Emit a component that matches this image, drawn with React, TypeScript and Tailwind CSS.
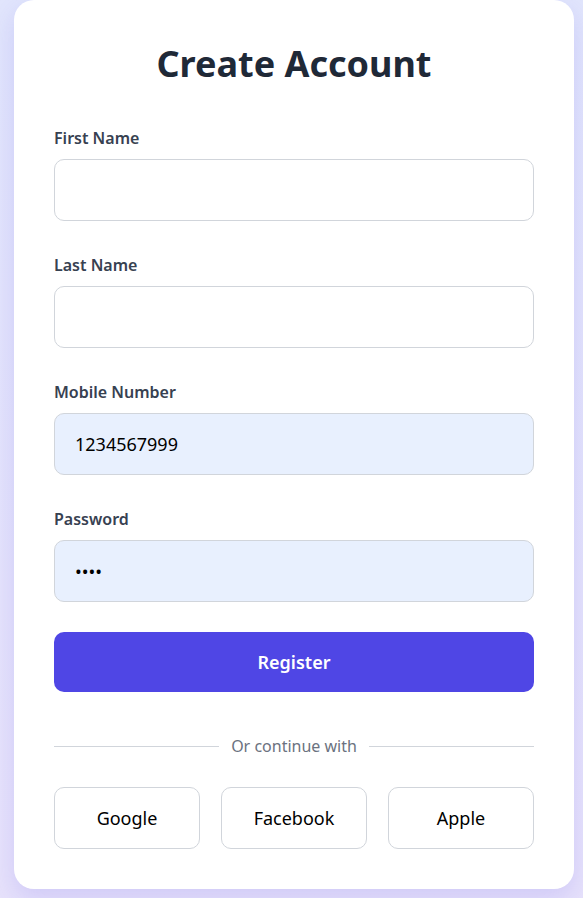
import React from 'react';

const font = { fontFamily: '"Noto Sans", "Open Sans", sans-serif' };

function Field({ label, type = 'text', value }: { label: string; type?: string; value?: string }) {
  const filled = value !== undefined;
  return (
    <div className="flex flex-col">
      <label className="text-base leading-6 font-semibold text-[#374151] mb-[9px]">{label}</label>
      <input
        type={type}
        defaultValue={value}
        className={`h-[62px] w-full rounded-[10px] border border-[#d1d5db] px-5 text-lg text-black outline-none ${filled ? 'bg-[#e8f0fe]' : 'bg-white'}`}
      />
    </div>
  );
}

export default function App() {
  return (
    <div className="min-h-screen bg-gradient-to-b from-[#e1e5fc] to-[#e7e2fb] pl-[14px]" style={font}>
      <div className="w-[560px] bg-white rounded-[20px] shadow-[0_10px_25px_rgba(79,70,229,0.15)] px-10 pt-10 pb-10">
        <h1 className="text-center text-4xl leading-[48px] font-bold text-[#1f2937] mb-[38px]">Create Account</h1>
        <form className="flex flex-col gap-[32px]" onSubmit={(e) => e.preventDefault()}>
          <Field label="First Name" />
          <Field label="Last Name" />
          <Field label="Mobile Number" value="1234567999" />
          <Field label="Password" type="password" value="abcd" />
        </form>
        <button className="mt-[30px] w-full h-[60px] rounded-[10px] bg-[#4f46e5] text-white text-lg font-semibold">
          Register
        </button>
        <div className="mt-[42px] flex items-center gap-3">
          <div className="flex-1 h-px bg-[#d1d5db]" />
          <span className="text-base text-[#6b7280]">Or continue with</span>
          <div className="flex-1 h-px bg-[#d1d5db]" />
        </div>
        <div className="mt-[29px] grid grid-cols-3 gap-[21px]">
          {['Google', 'Facebook', 'Apple'].map((s) => (
            <button key={s} className="h-[62px] rounded-[10px] border border-[#d1d5db] bg-white text-lg text-black">
              {s}
            </button>
          ))}
        </div>
      </div>
    </div>
  );
}
